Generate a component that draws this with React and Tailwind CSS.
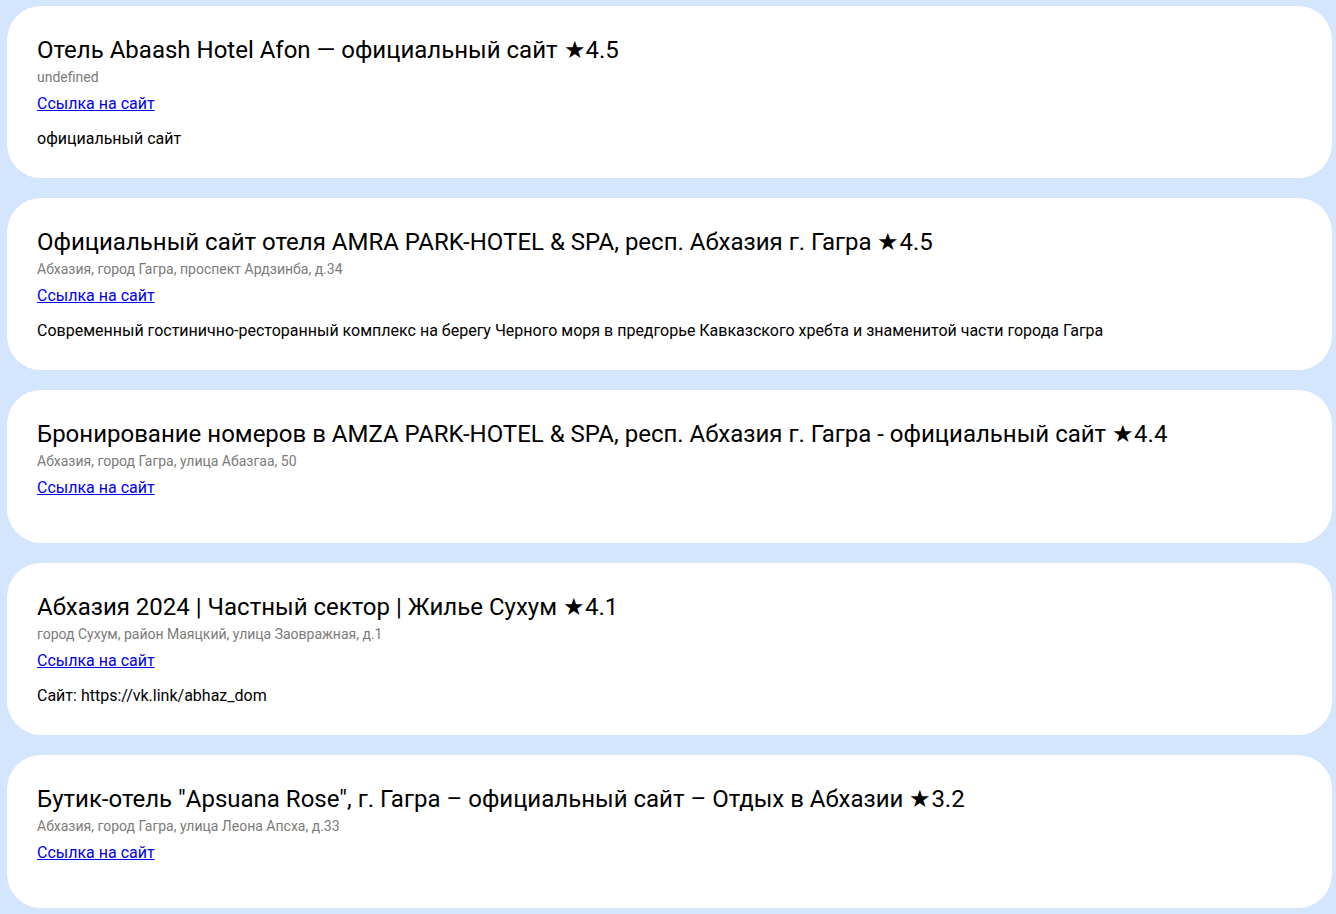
const hotels = [
  {
    title: "Отель Abaash Hotel Afon — официальный сайт ★4.5",
    address: "undefined",
    description: "официальный сайт",
  },
  {
    title: "Официальный сайт отеля AMRA PARK-HOTEL & SPA, респ. Абхазия г. Гагра ★4.5",
    address: "Абхазия, город Гагра, проспект Ардзинба, д.34",
    description:
      "Современный гостинично-ресторанный комплекс на берегу Черного моря в предгорье Кавказского хребта и знаменитой части города Гагра",
  },
  {
    title: "Бронирование номеров в AMZA PARK-HOTEL & SPA, респ. Абхазия г. Гагра - официальный сайт ★4.4",
    address: "Абхазия, город Гагра, улица Абазгаа, 50",
    description: "",
  },
  {
    title: "Абхазия 2024 | Частный сектор | Жилье Сухум ★4.1",
    address: "город Сухум, район Маяцкий, улица Заовражная, д.1",
    description: "Сайт: https://vk.link/abhaz_dom",
  },
  {
    title: "Бутик-отель \"Apsuana Rose\", г. Гагра – официальный сайт – Отдых в Абхазии ★3.2",
    address: "Абхазия, город Гагра, улица Леона Апсха, д.33",
    description: "",
  },
];

const HotelCard = ({ hotel }) => (
  <div className="bg-white rounded-[34px] pt-[30px] pb-[30px] px-[30px]">
    <h3 className="text-[24px] leading-[28px] text-black">{hotel.title}</h3>
    <p className="mt-[5px] text-[14px] leading-[16px] text-[#7b7b7b]">{hotel.address}</p>
    <a href="#" className="block mt-[9px] text-[16px] leading-[19px] text-[#0000ee] underline w-fit">
      Ссылка на сайт
    </a>
    <p className="mt-4 text-[16px] leading-[19px] text-black">{hotel.description}</p>
  </div>
);

export default function App() {
  return (
    <div
      className="min-h-screen bg-[#d3e6fd] pt-[6px] pl-[7px] pr-[4px] pb-[20px] flex flex-col gap-5"
      style={{ fontFamily: "Roboto, 'Liberation Sans', sans-serif" }}
    >
      {hotels.map((h, i) => (
        <HotelCard key={i} hotel={h} />
      ))}
    </div>
  );
}
